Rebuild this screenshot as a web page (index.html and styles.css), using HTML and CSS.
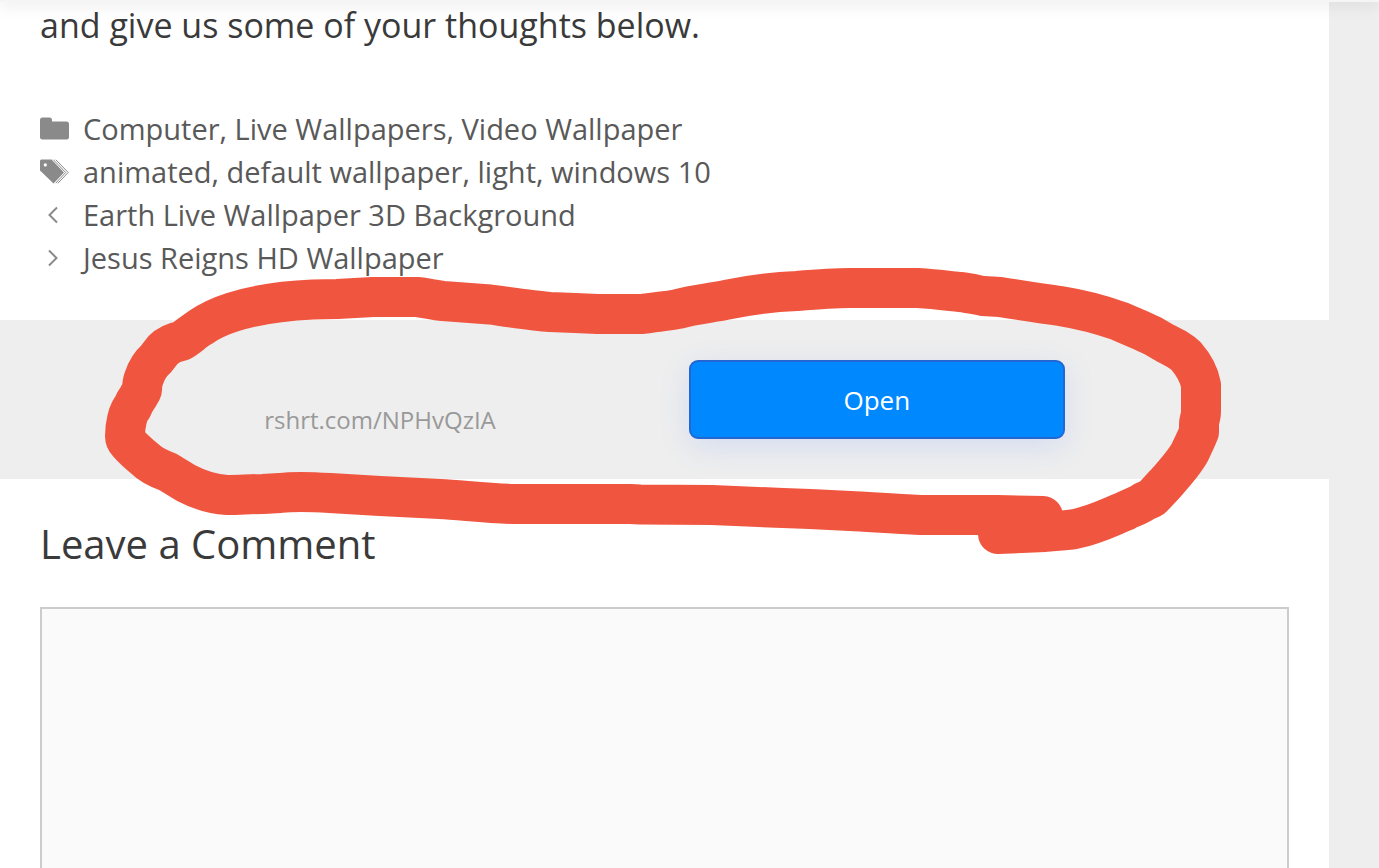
FILE: index.html
```html
<!DOCTYPE html>
<html lang="en">

<head>
    <meta charset="UTF-8">
    <meta name="viewport" content="width=device-width, initial-scale=1.0">
    <title>Live Wallpaper</title>
    <link rel="stylesheet" href="styles.css">
</head>

<body>
    <div class="topbar"></div>
    <main class="content">
        <article class="post">
            <p class="post__text">and give us some of your thoughts below.</p>
            <footer class="meta">
                <div class="meta__row">
                    <svg class="meta__icon" viewBox="0 0 30 30" aria-hidden="true">
                        <path d="M0 6a2.500 2.500 0 0 1 2.500-2.500H9.500a2.500 2.500 0 0 1 2.500 2.500v1.500H26.500a2.500 2.500 0 0 1 2.500 2.500v13a2.500 2.500 0 0 1-2.500 2.500h-24a2.500 2.500 0 0 1-2.500-2.500z" />
                    </svg>
                    <span><a href="#">Computer</a>, <a href="#">Live Wallpapers</a>, <a href="#">Video Wallpaper</a></span>
                </div>
                <div class="meta__row">
                    <svg class="meta__icon" viewBox="0 0 30 30" aria-hidden="true">
                        <path fill-rule="evenodd" d="M0 4a1.500 1.500 0 0 1 1.500-1.500H11.500L24 15.500 13.500 26.500 0 13.500zM5.300 6.300a1.600 1.600 0 1 0 0 3.200 1.600 1.600 0 0 0 0-3.200z" />
                        <path class="meta__line" d="M13.300 2.700L25.700 15.500 15.700 26.200M15.800 2.700L28.200 15.500 18 26.200" />
                    </svg>
                    <span><a href="#">animated</a>, <a href="#">default wallpaper</a>, <a href="#">light</a>, <a href="#">windows 10</a></span>
                </div>
                <div class="meta__row">
                    <svg class="meta__icon" viewBox="0 0 30 30" aria-hidden="true">
                        <path class="meta__arrow" d="M17 7.500L9.500 15 17 22.500" />
                    </svg>
                    <a href="#">Earth Live Wallpaper 3D Background</a>
                </div>
                <div class="meta__row">
                    <svg class="meta__icon" viewBox="0 0 30 30" aria-hidden="true">
                        <path class="meta__arrow" d="M9 7.500L16.500 15 9 22.500" />
                    </svg>
                    <a href="#">Jesus Reigns HD Wallpaper</a>
                </div>
            </footer>
        </article>

        <section class="ad">
            <span class="ad__url">rshrt.com/NPHvQzIA</span>
            <button class="ad__button" type="button">Open</button>
        </section>

        <section class="comments">
            <h3 class="comments__title"><label for="comment">Leave a Comment</label></h3>
            <textarea class="comments__input" id="comment"></textarea>
        </section>
    </main>

    <!-- hand-drawn marker loop around the ad -->
    <svg class="marker" viewBox="0 0 1379 868" width="1379" height="868" aria-hidden="true">
        <path d="M1043 516L997 515H920C895 514 870 512 850 511L810 509 783 508 712 505 640 504.500 630 504H513C485 503 460 500 440 499L380 496 330 493C315 492 295 491 280 493L263 494C250 494 240 495 227 495Q207 494 186 483L168 472C160 469 151 465 145 459Q134 450 128 443 125 440 125 436C125 425 128 412 132 408Q135 401 138 397L142 390Q142 383 144 378 148 366 156 359L163 350Q170 343 181 341C187 338 194 331 201 327Q214 318 233 312C255 305 280 301 313 299.500L337 299 373 297H417C427 298 433 300 443 301L490 304.500C515 308 535 311 550 312L575 313 598 314H642C655 312 668 311 678 309 695 304 712 303 728 299.500 750 295 768 292 797 291 820 289 835 288 850 288H918C935 289 950 291 960 292 970 293 977 295 983 296L1000 297C1025 301 1045 304 1060 306 1085 310 1102 315 1119 321L1140 330 1153 336 1165 343C1175 348 1181 351 1186 356 1193 364 1199 374 1201 385V412C1201 417 1199 420 1199 424V432C1196 440 1192 447 1190 452 1184 463 1174 474 1165 484L1152 498 1144 501.500C1138 506 1130 508 1125 511 1108 518 1095 525 1075 529 1063 531 1053 531 1045 532L998 534" />
    </svg>
</body>

</html>
```
FILE: styles.css
```css
*,
*::before,
*::after {
    box-sizing: border-box;
    margin: 0;
    padding: 0;
}

body {
    position: relative;
    height: 100vh;
    overflow: hidden;
    padding-right: 50px;
    background-color: #eeeeee;
    color: #3a3a3a;
    font-family: "Open Sans", "Noto Sans", sans-serif;
    font-size: 34px;
}

a {
    color: inherit;
    text-decoration: none;
}

.topbar {
    position: absolute;
    top: 0;
    left: 0;
    right: 0;
    height: 2px;
    background-color: #f5f5f5;
    box-shadow: 0 0 16px rgba(0, 0, 0, 0.4);
}

.post {
    padding: 0 40px 41px;
    background-color: #ffffff;
}

.post__text {
    padding-bottom: 57px;
    line-height: 50px;
}

.meta {
    color: #595959;
    font-size: 29px;
    line-height: 43px;
}

.meta__row {
    display: flex;
    align-items: center;
    gap: 13px;
}

.meta__icon {
    width: 30px;
    height: 30px;
    fill: #8a8a8a;
}

.meta__line,
.meta__arrow {
    fill: none;
    stroke: #8a8a8a;
    stroke-width: 1;
}

.meta__arrow {
    stroke-width: 2;
}

.ad {
    display: flex;
    align-items: center;
    justify-content: center;
    gap: 193px;
    padding: 40px 0;
}

.ad__url {
    padding-top: 40px;
    color: #999999;
    font-size: 24px;
    line-height: 39px;
}

.ad__button {
    width: 376px;
    height: 79px;
    border: 2px solid #2467d3;
    border-radius: 9px;
    background-color: #0088ff;
    box-shadow: 0 8px 30px rgba(60, 120, 255, 0.15);
    color: #ffffff;
    font-family: inherit;
    font-size: 26px;
    cursor: pointer;
}

.comments {
    padding: 40px;
    background-color: #ffffff;
}

.comments__title {
    margin-bottom: 38px;
    font-size: 40px;
    font-weight: 400;
    line-height: 50px;
}

.comments__input {
    display: block;
    width: 100%;
    height: 400px;
    padding: 20px 30px;
    border: 2px solid #cccccc;
    background-color: #fafafa;
    color: #666666;
    font: inherit;
    resize: none;
}

.marker {
    position: absolute;
    top: 0;
    left: 0;
    fill: none;
    stroke: #f0563f;
    stroke-width: 40;
    stroke-linecap: round;
    stroke-linejoin: round;
    pointer-events: none;
}
```
